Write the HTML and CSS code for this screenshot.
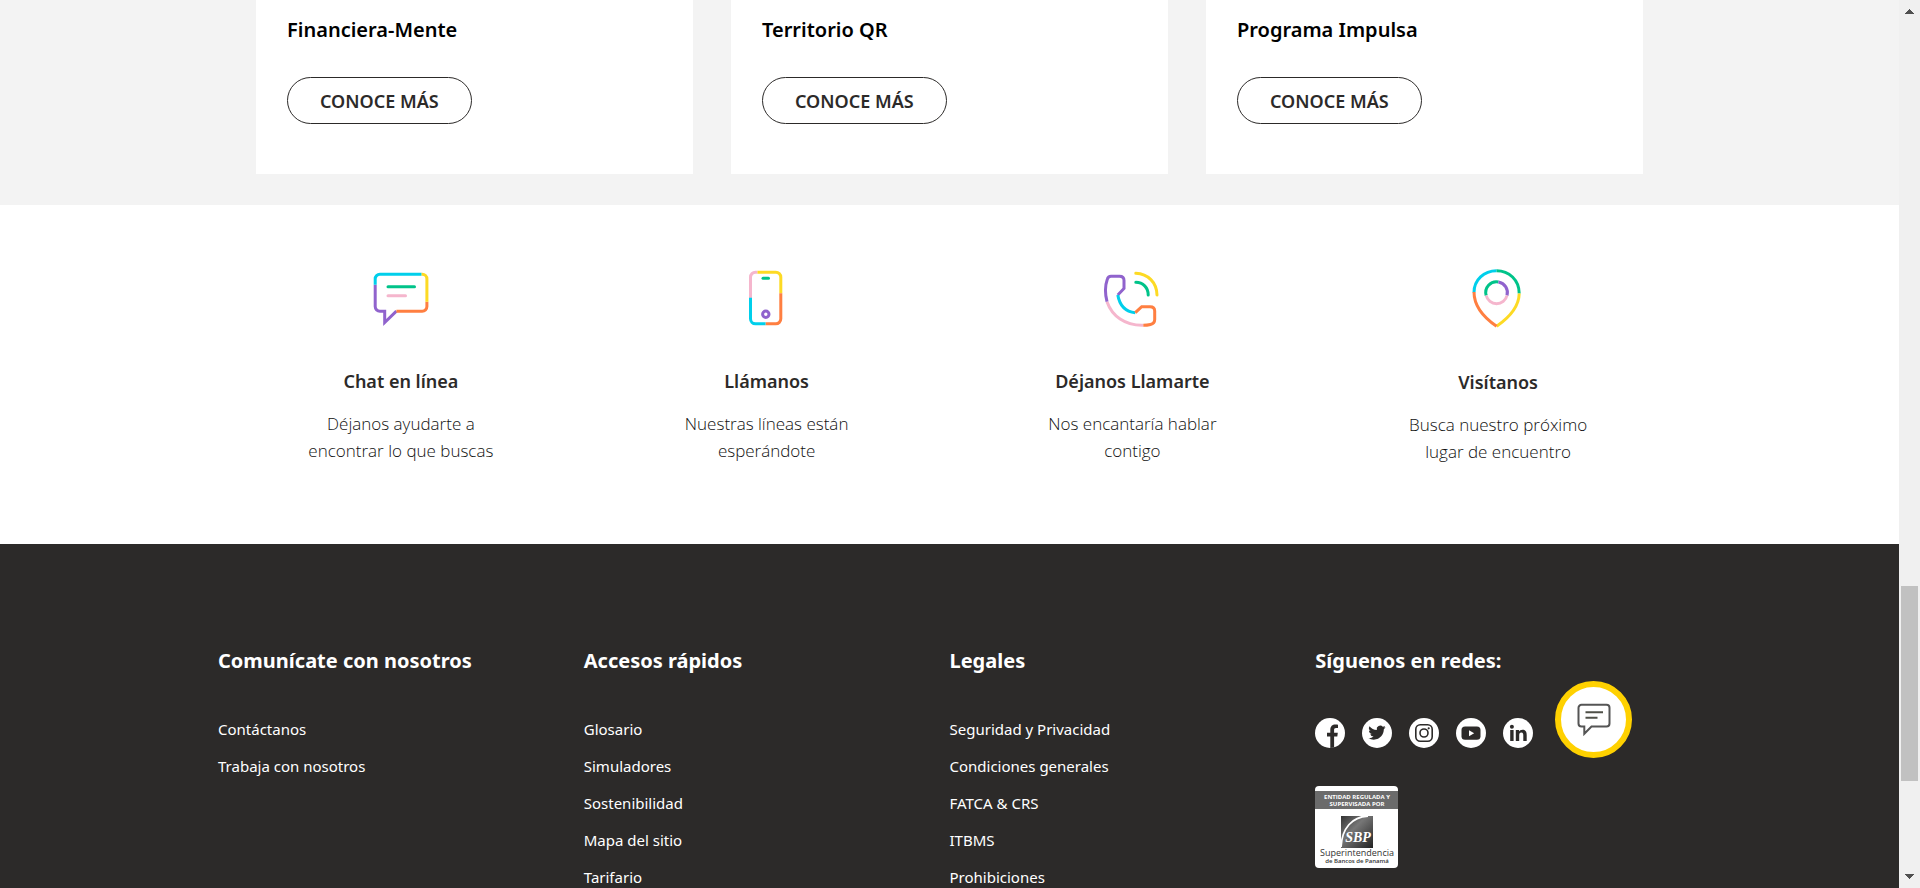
FILE: index.html
```html
<!DOCTYPE html>
<html lang="es">
<head>
<meta charset="utf-8">
<meta name="viewport" content="width=device-width, initial-scale=1">
<title>Canales y accesos</title>
<link rel="stylesheet" href="styles.css">
</head>
<body>
<div class="window">
<div class="page">
  <section class="programs">
    <div class="cards">
      <article class="card"><h2 class="card-title">Financiera-Mente</h2><a class="pill" href="#">CONOCE MÁS</a></article>
      <article class="card"><h2 class="card-title">Territorio QR</h2><a class="pill" href="#">CONOCE MÁS</a></article>
      <article class="card"><h2 class="card-title">Programa Impulsa</h2><a class="pill" href="#">CONOCE MÁS</a></article>
    </div>
  </section>

  <section class="channels">
    <div class="columns">
      <article class="channel">
        <svg class="channel-icon" width="60" height="60" viewBox="0 0 60 60" aria-hidden="true">
          <path class="purple" d="M4.200 16.700V38.500a4.700 4.700 0 0 0 4.700 4.700H13.700V54.500L25.400 43.200"/>
          <path class="orange" d="M25.400 43.200H51.200a4.700 4.700 0 0 0 4.700-4.700V33.700"/>
          <path class="yellow" d="M55.900 33.700V10.900a4.700 4.700 0 0 0-4.700-4.700H50.400"/>
          <path class="cyan" d="M50.400 6.200H8.900a4.700 4.700 0 0 0-4.700 4.700V16.700"/>
          <path class="green round" d="M17 18.700H43.500"/>
          <path class="pink round" d="M17 27.700H34.500"/>
        </svg>
        <h3 class="channel-title">Chat en línea</h3>
        <p class="channel-text">Déjanos ayudarte a<br>encontrar lo que buscas</p>
      </article>
      <article class="channel">
        <svg class="channel-icon" width="60" height="60" viewBox="0 0 60 60" aria-hidden="true">
          <path class="pink" d="M13.500 30V9.200a5 5 0 0 1 5-5h2"/>
          <path class="yellow" d="M20.500 4.200H38.800a5 5 0 0 1 5 5V25.300"/>
          <path class="orange" d="M43.800 25.300V50.800a5 5 0 0 1-5 5H28.500"/>
          <path class="cyan" d="M28.500 55.800H18.500a5 5 0 0 1-5-5V29.700"/>
          <path class="green round" d="M26 10.300H31.500"/>
          <circle class="purple" cx="28.800" cy="46.300" r="3.200"/>
        </svg>
        <h3 class="channel-title">Llámanos</h3>
        <p class="channel-text">Nuestras líneas están<br>esperándote</p>
      </article>
      <article class="channel">
        <svg class="channel-icon" width="60" height="60" viewBox="0 0 60 60" aria-hidden="true">
          <path class="pink" d="M5 33.700C10 48 23 57.800 41.300 57.300"/>
          <path class="purple" d="M5 33.700C3 26 3.300 17 5.300 11.300Q6.200 8.300 9 8.300H17.500Q22 8.300 22 12.500V20.500L15.800 27"/>
          <path class="cyan" d="M15.800 27C17.500 37 23.500 43.700 33.300 44.700"/>
          <path class="orange" d="M33.300 44.700L39.700 38.700H48Q52.700 38.700 52.700 43V51.500Q52.700 55.500 48.500 56.500Q45 57.300 41.300 57.300"/>
          <path class="green round" d="M33.800 14.300C41 14.300 46.200 19.500 46.200 27"/>
          <path class="yellow round" d="M33.800 5.300C46 5.800 54.800 14.500 55 27"/>
        </svg>
        <h3 class="channel-title">Déjanos Llamarte</h3>
        <p class="channel-text">Nos encantaría hablar<br>contigo</p>
      </article>
      <article class="channel">
        <svg class="channel-icon" width="60" height="61" viewBox="0 0 60 61" aria-hidden="true">
          <path class="cyan" d="M6 24.500C6 12 16 2.700 28.600 2.700"/>
          <path class="green" d="M28.600 2.700C41 2.700 51.200 12 51.200 25.500"/>
          <path class="yellow" d="M51.200 25.500C51 38 42 49 28.600 58.300"/>
          <path class="orange" d="M28.600 58.300C15 49 6 37 6 24"/>
          <path class="green" d="M18.200 27.500A10.700 10.700 0 0 1 30.500 14"/>
          <path class="purple" d="M30.500 14A10.700 10.700 0 0 1 39 27.500"/>
          <path class="pink" d="M39 27.500A10.700 10.700 0 0 1 18.200 27.500"/>
        </svg>
        <h3 class="channel-title">Visítanos</h3>
        <p class="channel-text">Busca nuestro próximo<br>lugar de encuentro</p>
      </article>
    </div>
  </section>

  <footer class="footer">
    <div class="columns">
      <nav class="footer-col" aria-labelledby="f1">
        <h3 class="footer-title" id="f1">Comunícate con nosotros</h3>
        <ul class="links">
          <li><a href="#">Contáctanos</a></li>
          <li><a href="#">Trabaja con nosotros</a></li>
        </ul>
      </nav>
      <nav class="footer-col" aria-labelledby="f2">
        <h3 class="footer-title" id="f2">Accesos rápidos</h3>
        <ul class="links">
          <li><a href="#">Glosario</a></li>
          <li><a href="#">Simuladores</a></li>
          <li><a href="#">Sostenibilidad</a></li>
          <li><a href="#">Mapa del sitio</a></li>
          <li><a href="#">Tarifario</a></li>
        </ul>
      </nav>
      <nav class="footer-col" aria-labelledby="f3">
        <h3 class="footer-title" id="f3">Legales</h3>
        <ul class="links">
          <li><a href="#">Seguridad y Privacidad</a></li>
          <li><a href="#">Condiciones generales</a></li>
          <li><a href="#">FATCA &amp; CRS</a></li>
          <li><a href="#">ITBMS</a></li>
          <li><a href="#">Prohibiciones</a></li>
        </ul>
      </nav>
      <div class="footer-col">
        <h3 class="footer-title">Síguenos en redes:</h3>
        <div class="social">
          <a href="#" aria-label="Facebook"><svg width="30" height="30" viewBox="0 0 30 30"><circle cx="15" cy="15" r="15" fill="#fff"/><path fill="#2c2a29" d="M15.300 30V18.500H12V14.800h3.300V12c0-3.700 2-5.500 5.200-5.500 1.100 0 2 .1 2.500.2v3.300h-1.900c-1.600 0-2 .8-2 2v2.800h3.700l-.5 3.700h-3.200V29.500z"/></svg></a>
          <a href="#" aria-label="Twitter"><svg width="30" height="30" viewBox="0 0 30 30"><circle cx="15" cy="15" r="15" fill="#fff"/><path fill="#2c2a29" transform="translate(6.300 6) scale(.72)" d="M23.950 4.570a10 10 0 0 1-2.820.770 4.960 4.960 0 0 0 2.160-2.720c-.95.560-2 .96-3.130 1.180a4.920 4.920 0 0 0-8.380 4.480A13.940 13.940 0 0 1 1.640 3.160a4.920 4.920 0 0 0 1.520 6.570 4.900 4.900 0 0 1-2.230-.61v.06a4.920 4.920 0 0 0 3.950 4.830 5 5 0 0 1-2.210.080 4.940 4.940 0 0 0 4.600 3.420A9.870 9.870 0 0 1 0 19.540a13.990 13.990 0 0 0 7.550 2.210c9.050 0 14-7.500 14-13.980 0-.21 0-.42-.020-.63a9.940 9.940 0 0 0 2.460-2.550z"/></svg></a>
          <a href="#" aria-label="Instagram"><svg width="30" height="30" viewBox="0 0 30 30"><circle cx="15" cy="15" r="15" fill="#fff"/><g fill="none" stroke="#2c2a29" stroke-width="1.600"><rect x="6.800" y="6.800" width="16.400" height="16.400" rx="4.500"/><circle cx="15" cy="15" r="4"/></g><circle cx="19.700" cy="10.300" r="1.100" fill="#2c2a29"/></svg></a>
          <a href="#" aria-label="YouTube"><svg width="30" height="30" viewBox="0 0 30 30"><circle cx="15" cy="15" r="15" fill="#fff"/><rect x="5.500" y="8.500" width="19" height="13.300" rx="3.600" fill="#2c2a29"/><path fill="#fff" d="M13 12.200v6l5.200-3z"/></svg></a>
          <a href="#" aria-label="LinkedIn"><svg width="30" height="30" viewBox="0 0 30 30"><circle cx="15" cy="15" r="15" fill="#fff"/><g fill="#2c2a29"><circle cx="8.900" cy="8.800" r="2"/><path d="M7.200 12h3.400v11H7.200zM12.800 12H16v1.500c.6-1 1.900-1.800 3.500-1.800 3.400 0 4.200 2.200 4.200 5.200V23h-3.400v-5.500c0-1.400-.2-2.900-1.900-2.900-1.800 0-2.200 1.300-2.200 2.800V23h-3.400z"/></g></svg></a>
        </div>
        <svg class="seal" width="83" height="82" viewBox="0 0 83 82" role="img" aria-label="Superintendencia de Bancos de Panamá">
          <defs>
            <linearGradient id="sealShade" x1="0" y1="0" x2="1" y2="1"><stop offset="0" stop-color="#333"/><stop offset=".4" stop-color="#777"/><stop offset="1" stop-color="#222"/></linearGradient>
            <clipPath id="sealClip"><rect width="83" height="82" rx="4"/></clipPath>
          </defs>
          <g clip-path="url(#sealClip)">
            <rect width="83" height="82" fill="#fff"/>
            <rect y="5" width="83" height="18" fill="#6b6b6b"/>
          </g>
          <g class="seal-head" text-anchor="middle"><text x="42" y="13">ENTIDAD REGULADA Y</text><text x="42" y="20">SUPERVISADA POR</text></g>
          <rect x="26" y="30" width="32" height="32" fill="url(#sealShade)"/>
          <path d="M26 61C27 42 37 31 53 30" fill="none" stroke="#fff" stroke-width="1.800"/>
          <text class="seal-mark" x="43" y="56" text-anchor="middle">SBP</text>
          <text class="seal-name" x="42" y="70" text-anchor="middle">Superintendencia</text>
          <text class="seal-sub" x="42" y="77" text-anchor="middle">de Bancos de Panamá</text>
        </svg>
      </div>
    </div>
  </footer>

  <button class="chat" type="button" aria-label="Abrir chat">
    <svg width="34" height="34" viewBox="0 0 34 34" fill="none" stroke="#555" stroke-width="2" aria-hidden="true">
      <path d="M4.500 1.800H29.500a3 3 0 0 1 3 3V20.500a3 3 0 0 1-3 3H14.500L7.300 30.800V23.500H4.500a3 3 0 0 1-3-3V4.800a3 3 0 0 1 3-3z"/>
      <path d="M8.500 9.200H26M8.500 14.700H20.500" stroke="#4f5048"/>
    </svg>
  </button>
</div>

<div class="scrollbar" aria-hidden="true">
  <svg width="9" height="5" viewBox="0 0 9 5"><path fill="#505050" d="M4 0h1v1h1v1h1v1h1v1h1v1H0V4h1V3h1V2h1V1h1z"/></svg>
  <div class="track"><div class="thumb"></div></div>
  <svg width="9" height="5" viewBox="0 0 9 5"><path fill="#505050" d="M0 0h9v1H8v1H7v1H6v1H5v1H4V4H3V3H2V2H1V1H0z"/></svg>
</div>
</div>
</body>
</html>
```
FILE: styles.css
```css
* {
  box-sizing: border-box;
}

body {
  margin: 0;
  background: #fff;
  color: #2c2a29;
  font-family: "Open Sans", "Noto Sans", sans-serif;
}

h2,
h3,
p,
ul {
  margin: 0;
  padding: 0;
}

a {
  color: inherit;
  text-decoration: none;
}

.window {
  display: flex;
  height: 100vh;
  overflow: hidden;
}

.page {
  position: relative;
  flex: 1;
  min-width: 0;
  display: flex;
  flex-direction: column;
}

/* Program cards */
.programs {
  flex: none;
  padding: 0 32px 31px;
  background: #f3f3f3;
}

.cards {
  display: grid;
  grid-template-columns: repeat(3, 1fr);
  gap: 38px;
  max-width: 1387px;
  margin: 0 auto;
}

.card {
  padding: 16px 31px 50px;
  background: #fff;
}

.card-title {
  margin-bottom: 33px;
  color: #000;
  font-family: "Noto Sans", sans-serif;
  font-size: 20px;
  font-weight: 600;
  line-height: 28px;
}

.pill {
  display: inline-flex;
  align-items: center;
  height: 47px;
  padding: 0 32px;
  border: 1px solid #2c2a29;
  border-radius: 24px;
  font-family: "Noto Sans", sans-serif;
  font-size: 18px;
  font-weight: 600;
  vertical-align: top;
}

/* Contact channels */
.columns {
  display: grid;
  grid-template-columns: repeat(4, 1fr);
  max-width: 1463px;
  margin: 0 auto;
}

.channels {
  flex: none;
  padding: 63px 0 79px;
}

.channel {
  text-align: center;
}

.channel-icon {
  display: block;
  margin: 0 auto 40px;
  fill: none;
  stroke-width: 3;
}

.purple { stroke: #9063cd; }
.orange { stroke: #ff7f41; }
.yellow { stroke: #fdda24; }
.cyan { stroke: #00cfeb; }
.green { stroke: #00c389; }
.pink { stroke: #f5b6cd; }
.round { stroke-linecap: round; }

.channel-title {
  margin-bottom: 15px;
  font-family: "Noto Sans", sans-serif;
  font-size: 18px;
  font-weight: 600;
  line-height: 27px;
}

.channel-text {
  color: #111;
  font-size: 17px;
  font-weight: 300;
  line-height: 27px;
}

/* Footer */
.footer {
  flex: 1 0 auto;
  padding-top: 103px;
  background: #2c2a29;
  color: #fff;
}

.footer-title {
  margin-bottom: 36px;
  font-family: "Noto Sans", sans-serif;
  font-size: 20px;
  font-weight: 700;
  line-height: 28px;
}

.links {
  list-style: none;
  font-family: "Noto Sans", sans-serif;
  font-size: 15px;
  line-height: 37px;
}

.social {
  display: flex;
  gap: 17px;
  padding-top: 7px;
  margin-bottom: 38px;
}

.social svg,
.seal {
  display: block;
}

.seal-head {
  fill: #fff;
  font: 700 6px "Open Sans", sans-serif;
}

.seal-mark {
  fill: #fff;
  font: italic 700 14px "Liberation Serif", serif;
}

.seal-name {
  fill: #333;
  font: 400 9px "Open Sans", sans-serif;
}

.seal-sub {
  fill: #333;
  font: 600 6px "Open Sans", sans-serif;
}

.chat {
  position: absolute;
  right: 267px;
  bottom: 130px;
  display: flex;
  align-items: center;
  justify-content: center;
  width: 77px;
  height: 77px;
  padding: 0;
  border: 6px solid #ffd100;
  border-radius: 50%;
  background: #fff;
}

/* Scroll bar */
.scrollbar {
  display: flex;
  flex: none;
  flex-direction: column;
  align-items: center;
  width: 21px;
  padding: 9px 2px;
  background: #f0f0f0;
}

.track {
  display: flex;
  flex: 1;
  flex-direction: column;
  justify-content: flex-end;
  width: 17px;
  padding-bottom: 93px;
}

.thumb {
  height: 25.4%;
  background: #c1c1c1;
}
```
